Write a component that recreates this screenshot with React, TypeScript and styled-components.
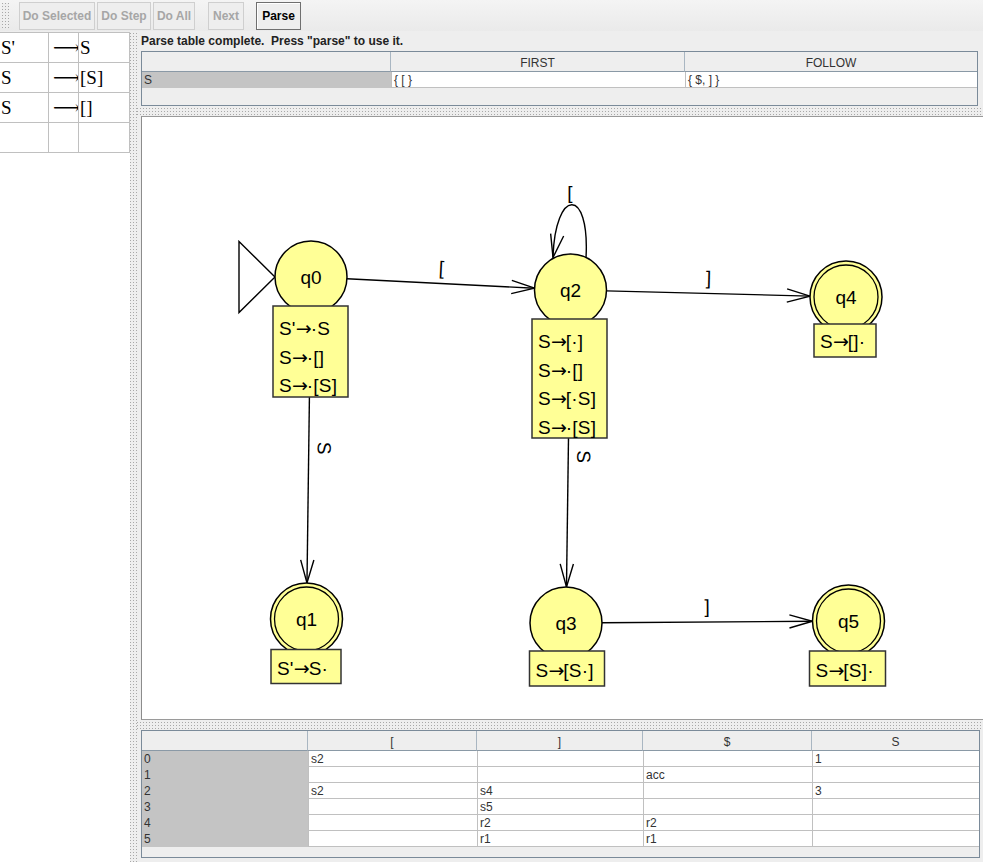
import React from "react";
import styled, { createGlobalStyle } from "styled-components";

const GlobalStyle = createGlobalStyle`
  html, body { margin: 0; padding: 0; background: #eeeeee; }
  body { font-family: "Liberation Sans", Arial, sans-serif; overflow: hidden; }
  * { box-sizing: border-box; }
`;

const dotted = `
  background:
    repeating-linear-gradient(90deg, transparent 0 1px, #eeeeee 1px 3px),
    repeating-linear-gradient(0deg, transparent 0 1px, #eeeeee 1px 3px),
    #a8a8a8;
`;

const Frame = styled.div`
  width: 983px;
  height: 862px;
  display: flex;
  flex-direction: column;
  background: #eeeeee;
`;

const Toolbar = styled.div`
  height: 31px;
  flex: none;
  display: flex;
  align-items: center;
  padding-left: 2px;
  background: linear-gradient(#f4f4f4, #eaeaea);
`;

const Grip = styled.div`
  width: 7px;
  height: 25px;
  margin-right: 10px;
  ${dotted}
`;

const ToolButton = styled.button<{ $w: number; $on?: boolean; $gap?: number }>`
  width: ${(p) => p.$w}px;
  height: 28px;
  margin-left: ${(p) => p.$gap ?? 0}px;
  padding: 0;
  font: bold 12px "Liberation Sans", Arial, sans-serif;
  color: ${(p) => (p.$on ? "#000000" : "#a6a6a6")};
  background: #eeeeee;
  border: 1px solid ${(p) => (p.$on ? "#6f6f6f" : "#cfcfcf")};
  box-shadow: ${(p) => (p.$on ? "inset 1px 1px 0 #ffffff" : "none")};
  border-radius: 0;
  cursor: default;
`;

const Main = styled.div`
  flex: 1;
  display: flex;
  min-height: 0;
`;

const LeftPane = styled.div`
  width: 130px;
  flex: none;
  background: #ffffff;
  border-top: 1px solid #eeeeee;
`;

const GrammarGrid = styled.div`
  display: grid;
  grid-template-columns: 49px 30px 51px;
  grid-auto-rows: 30px;
  border-top: 1px solid #c0c0c0;
  font-family: "Liberation Serif", "DejaVu Serif", "DejaVu Sans", serif;
  font-size: 19px;
  color: #000000;
`;

const GrammarCell = styled.div<{ $pad: number }>`
  border-right: 1px solid #c0c0c0;
  border-bottom: 1px solid #c0c0c0;
  padding-left: ${(p) => p.$pad}px;
  display: flex;
  align-items: center;
  white-space: nowrap;
  overflow: hidden;
`;

const VDivider = styled.div`
  width: 7px;
  flex: none;
  ${dotted}
`;

const RightPane = styled.div`
  flex: 1;
  display: flex;
  flex-direction: column;
  padding-left: 4px;
  min-width: 0;
`;

const Status = styled.div`
  height: 20px;
  flex: none;
  font: bold 12px "Liberation Sans", Arial, sans-serif;
  color: #222222;
  white-space: pre;
  padding-top: 3px;
`;

const TableFrame = styled.div<{ $h: number; $mr: number }>`
  height: ${(p) => p.$h}px;
  flex: none;
  margin-right: ${(p) => p.$mr}px;
  border: 1px solid #7a8a99;
  background: #eeeeee;
  font: 12px "Liberation Sans", Arial, sans-serif;
  color: #333333;
`;

const GridRow = styled.div<{ $cols: string; $h: number }>`
  display: grid;
  grid-template-columns: ${(p) => p.$cols};
  height: ${(p) => p.$h}px;
`;

const HeadCell = styled.div`
  background: #eeeeee;
  border-right: 1px solid #a9b6c2;
  border-bottom: 1px solid #8a99a6;
  display: flex;
  align-items: center;
  justify-content: center;
  padding-top: 2px;
  &:last-child { border-right: none; }
`;

const KeyCell = styled.div`
  background: #c4c4c4;
  border-bottom: 1px solid #c4c4c4;
  padding-left: 2px;
  display: flex;
  align-items: center;
`;

const ValueCell = styled.div`
  background: #ffffff;
  border-left: 1px solid #c0c0c0;
  border-bottom: 1px solid #c0c0c0;
  padding-left: 2px;
  display: flex;
  align-items: center;
  white-space: pre;
`;

const HDivider = styled.div`
  height: 10px;
  flex: none;
  margin-left: -4px;
  padding: 2px 0 1px 0;
  background: #eeeeee;
  & > div { height: 7px; ${dotted} }
`;

const Canvas = styled.div`
  height: 604px;
  flex: none;
  background: #ffffff;
  border-left: 1px solid #8c8c8c;
  border-top: 1px solid #9a9a9a;
  border-bottom: 1px solid #9a9a9a;
  overflow: hidden;
`;

const Diagram = styled.svg`
  display: block;
  width: 100%;
  height: 100%;
  font-family: "Liberation Sans", Arial, sans-serif;
`;

const EdgeLine = styled.line`
  stroke: #000000;
  stroke-width: 1.4;
`;

const Stroke = styled.path`
  fill: none;
  stroke: #000000;
  stroke-width: 1.4;
`;

const StateCircle = styled.circle`
  fill: #ffff96;
  stroke: #000000;
  stroke-width: 1.5;
`;

const RingCircle = styled.circle`
  fill: none;
  stroke: #000000;
  stroke-width: 1.3;
`;

const ItemBox = styled.rect`
  fill: #ffff96;
  stroke: #333333;
  stroke-width: 1.5;
`;

const StateName = styled.text`
  font-size: 19px;
  fill: #000000;
  text-anchor: middle;
`;

const ItemText = styled.text`
  font-size: 19px;
  letter-spacing: 0.2px;
  fill: #000000;
`;

const ArrowGlyph = styled.tspan`
  font-family: "DejaVu Sans", "Liberation Sans", sans-serif;
  letter-spacing: -1px;
`;

const EdgeLabel = styled.text`
  font-size: 19px;
  fill: #000000;
  text-anchor: middle;
`;

type Box = { x: number; y: number; w: number; h: number };
type StateDef = { id: string; cx: number; cy: number; final?: boolean; box: Box; items: string[] };

const R = 36;

const states: StateDef[] = [
  { id: "q0", cx: 311, cy: 277, box: { x: 273, y: 306, w: 75, h: 91 }, items: ["S'→·S", "S→·[]", "S→·[S]"] },
  { id: "q1", cx: 306.5, cy: 619, final: true, box: { x: 271, y: 649.5, w: 70, h: 34 }, items: ["S'→S·"] },
  { id: "q2", cx: 570.5, cy: 290, box: { x: 532, y: 319, w: 75, h: 119 }, items: ["S→[·]", "S→·[]", "S→[·S]", "S→·[S]"] },
  { id: "q3", cx: 566, cy: 623, box: { x: 529.5, y: 651, w: 75, h: 35 }, items: ["S→[S·]"] },
  { id: "q4", cx: 846, cy: 297, final: true, box: { x: 814, y: 324, w: 62, h: 33 }, items: ["S→[]·"] },
  { id: "q5", cx: 848.5, cy: 621, final: true, box: { x: 809.5, y: 651, w: 76, h: 35 }, items: ["S→[S]·"] },
];

const byId = (id: string) => states.find((s) => s.id === id)!;

const edges = [
  { from: "q0", to: "q2", label: "[" },
  { from: "q2", to: "q4", label: "]" },
  { from: "q0", to: "q1", label: "S" },
  { from: "q2", to: "q3", label: "S" },
  { from: "q3", to: "q5", label: "]" },
];

const AH_LEN = 24;
const AH_ANG = (16 * Math.PI) / 180;

function arrowHead(tx: number, ty: number, dx: number, dy: number) {
  const pts = [AH_ANG, -AH_ANG].map((a) => {
    const rx = dx * Math.cos(a) - dy * Math.sin(a);
    const ry = dx * Math.sin(a) + dy * Math.cos(a);
    return [tx - AH_LEN * rx, ty - AH_LEN * ry];
  });
  return `M${pts[0][0]},${pts[0][1]} L${tx},${ty} L${pts[1][0]},${pts[1][1]}`;
}

function Item({ x, y, text }: { x: number; y: number; text: string }) {
  const [lhs, rhs] = text.split("→");
  return (
    <ItemText x={x} y={y}>
      {lhs}
      <ArrowGlyph>→</ArrowGlyph>
      {rhs}
    </ItemText>
  );
}

const OX = 142;
const OY = 117;
const CW = 841;
const CH = 602;

function Automaton() {
  return (
    <Diagram viewBox={`${OX} ${OY} ${CW} ${CH}`}>
      <Stroke d="M239,241.5 L275,277 L239,312.5 Z" style={{ fill: "#ffffff" }} />
      {edges.map((e) => {
        const a = byId(e.from);
        const b = byId(e.to);
        const vx = b.cx - a.cx;
        const vy = b.cy - a.cy;
        const len = Math.hypot(vx, vy);
        const dx = vx / len;
        const dy = vy / len;
        const sx = a.cx + dx * R;
        const sy = a.cy + dy * R;
        const tx = b.cx - dx * R;
        const ty = b.cy - dy * R;
        const mx = (a.cx + b.cx) / 2;
        const my = (a.cy + b.cy) / 2;
        const ang = (Math.atan2(vy, vx) * 180) / Math.PI;
        return (
          <g key={e.from + e.to}>
            <EdgeLine x1={sx} y1={sy} x2={tx} y2={ty} />
            <Stroke d={arrowHead(tx, ty, dx, dy)} />
            <EdgeLabel transform={`translate(${mx},${my}) rotate(${ang})`} y={-9}>
              {e.label}
            </EdgeLabel>
          </g>
        );
      })}
      <Stroke d="M553,257.5 C555,188 590,186 586,258" />
      <Stroke d={arrowHead(553, 257.5, -0.18, 0.984)} />
      <EdgeLabel x={570} y={199}>[</EdgeLabel>
      {states.map((s) => (
        <g key={s.id}>
          <StateCircle cx={s.cx} cy={s.cy} r={R} />
          {s.final && <RingCircle cx={s.cx} cy={s.cy} r={R - 4} />}
          <StateName x={s.cx} y={s.cy + 7}>{s.id}</StateName>
        </g>
      ))}
      {states.map((s) => (
        <g key={s.id + "box"}>
          <ItemBox x={s.box.x} y={s.box.y} width={s.box.w} height={s.box.h} />
          {s.items.map((it, i) => (
            <Item
              key={it + i}
              text={it}
              x={s.box.x + 6}
              y={s.items.length === 1 ? s.box.y + s.box.h - 9 : s.box.y + 29 + i * 28.7}
            />
          ))}
        </g>
      ))}
    </Diagram>
  );
}

const grammar = [
  ["S'", "⟶", "S"],
  ["S", "⟶", "[S]"],
  ["S", "⟶", "[]"],
  ["", "", ""],
];

const firstCols = "249px 294px 1fr";
const actionCols = "166px 169px 166px 169px 1fr";
const actionHead = ["", "[", "]", "$", "S"];
const actionRows = [
  ["0", "s2", "", "", "1"],
  ["1", "", "", "acc", ""],
  ["2", "s2", "s4", "", "3"],
  ["3", "", "s5", "", ""],
  ["4", "", "r2", "r2", ""],
  ["5", "", "r1", "r1", ""],
];

export default function App() {
  return (
    <Frame>
      <GlobalStyle />
      <Toolbar>
        <Grip />
        <ToolButton $w={76}>Do Selected</ToolButton>
        <ToolButton $w={54} $gap={2}>Do Step</ToolButton>
        <ToolButton $w={42} $gap={2}>Do All</ToolButton>
        <ToolButton $w={36} $gap={13}>Next</ToolButton>
        <ToolButton $w={45} $gap={12} $on>Parse</ToolButton>
      </Toolbar>
      <Main>
        <LeftPane>
          <GrammarGrid>
            {grammar.map((row, r) =>
              row.map((c, i) => (
                <GrammarCell key={r + "-" + i} $pad={i === 1 ? 4 : 1}>
                  {c}
                </GrammarCell>
              ))
            )}
          </GrammarGrid>
        </LeftPane>
        <VDivider />
        <RightPane>
          <Status>{'Parse table complete.  Press "parse" to use it.'}</Status>
          <TableFrame $h={55} $mr={5}>
            <GridRow $cols={firstCols} $h={20}>
              <HeadCell />
              <HeadCell>FIRST</HeadCell>
              <HeadCell>FOLLOW</HeadCell>
            </GridRow>
            <GridRow $cols={firstCols} $h={16}>
              <KeyCell>S</KeyCell>
              <ValueCell>{"{ [ }"}</ValueCell>
              <ValueCell>{"{ $, ] }"}</ValueCell>
            </GridRow>
          </TableFrame>
          <HDivider><div /></HDivider>
          <Canvas>
            <Automaton />
          </Canvas>
          <HDivider><div /></HDivider>
          <TableFrame $h={128} $mr={3}>
            <GridRow $cols={actionCols} $h={20}>
              {actionHead.map((h, i) => (
                <HeadCell key={i}>{h}</HeadCell>
              ))}
            </GridRow>
            {actionRows.map((row, r) => (
              <GridRow key={r} $cols={actionCols} $h={16}>
                {row.map((c, i) =>
                  i === 0 ? <KeyCell key={i}>{c}</KeyCell> : <ValueCell key={i}>{c}</ValueCell>
                )}
              </GridRow>
            ))}
          </TableFrame>
        </RightPane>
      </Main>
    </Frame>
  );
}
